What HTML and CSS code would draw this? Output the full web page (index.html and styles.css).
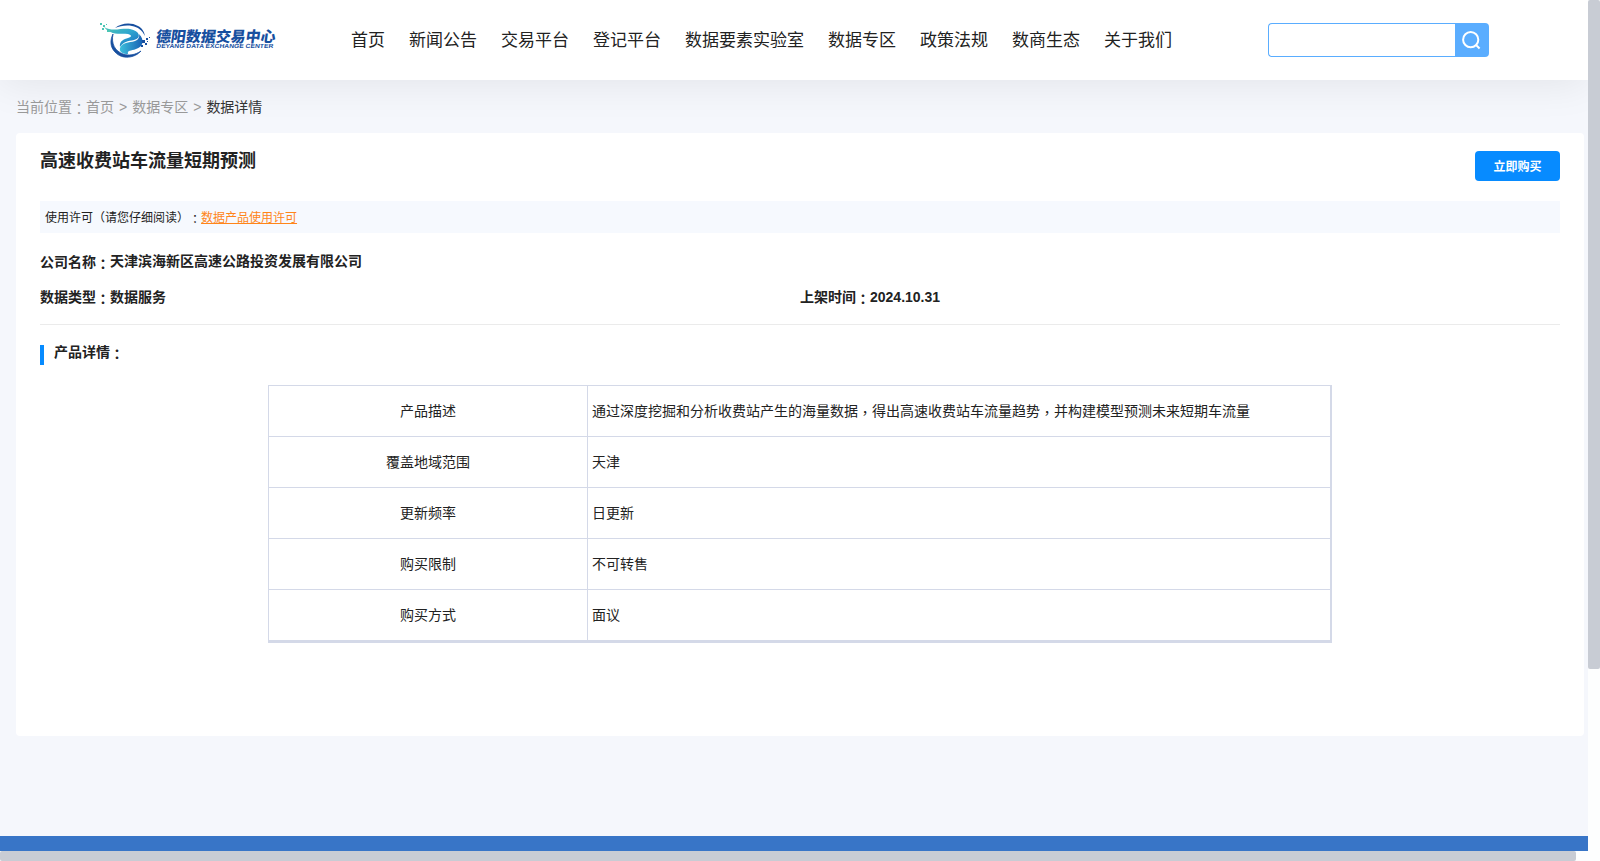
FILE: index.html
```
<!DOCTYPE html>
<html lang="zh-CN">
<head>
	<meta charset="UTF-8">
	<meta name="viewport" content="width=device-width, initial-scale=1.0">
	<title>数据详情</title>
	<link rel="stylesheet" href="styles.css">
</head>
<body>
	<div class="window">
		<div class="page">
			<header class="header">
				<a class="logo">
					<svg width="180" height="40" viewBox="0 0 180 40">
						<defs>
							<linearGradient id="wave" x1="0" y1="0" x2="1" y2="1">
								<stop offset="0" stop-color="#4cc5b4"/>
								<stop offset="0.5" stop-color="#2fa6cf"/>
								<stop offset="1" stop-color="#1668c0"/>
							</linearGradient>
							<linearGradient id="tail" x1="0" y1="0" x2="1" y2="0">
								<stop offset="0" stop-color="#3cc0dc"/>
								<stop offset="1" stop-color="#1760b4"/>
							</linearGradient>
						</defs>
						<path d="M15 8C21 3 31 2 38 6C42 8 44 11 45 16C42 10 38 7 32 6C26 5 20 6 15 8Z" fill="#174f9f"/>
						<path d="M13 14C11 24 15 31 23 34C29 36 35 35 41 31C35 38 22 40 15 32C10 27 10 20 13 14Z" fill="#174f9f" stroke="#174f9f" stroke-width="0.8"/>
						<path d="M4 7C12 12 21 8 30 9C40 11 42 18 34 20C28 21 23 22 20 27C19 21 24 19 28 18C32 17 32 15 28 14C21 13 11 16 4 7Z" fill="url(#wave)"/>
						<path d="M20 28C22 22 29 23 35 21C38 20 40 17 39 14C45 20 43 27 36 29C31 31 27 30 28 34C23 34 19 32 20 28Z" fill="url(#tail)"/>
						<path d="M0 3h2v2H0zM3 5h2v2H3zM2 8h2v2H2zM6 4h1v1H6zM7 10h3v2H7z" fill="#4cc5b4"/>
						<path d="M42 20h3v3h-3zM46 18h2v2h-2zM45 23h2v2h-2zM41 25h2v2h-2zM49 17h1v1h-1zM47 21h1v1h-1z" fill="#174f9f"/>
						<text class="logo-cn" x="54.5" y="22" textLength="119.5" lengthAdjust="spacingAndGlyphs" transform="translate(4 0) skewX(-8)">德阳数据交易中心</text>
						<text class="logo-en" x="56" y="28.2" textLength="117" lengthAdjust="spacingAndGlyphs" transform="translate(4 0) skewX(-8)">DEYANG DATA EXCHANGE CENTER</text>
					</svg>
				</a>
				<nav class="nav">
					<a>首页</a>
					<a>新闻公告</a>
					<a>交易平台</a>
					<a>登记平台</a>
					<a>数据要素实验室</a>
					<a>数据专区</a>
					<a>政策法规</a>
					<a>数商生态</a>
					<a>关于我们</a>
				</nav>
				<div class="search">
					<input type="text" class="search-input">
					<button class="search-btn">
						<svg width="20" height="20" viewBox="0 0 20 20" fill="none" stroke="#fff" stroke-width="2">
							<circle cx="9.7" cy="9.7" r="7.6"/>
							<path d="M15 15L18.6 18.4"/>
						</svg>
					</button>
				</div>
			</header>

			<div class="crumbs">
				<span>当前位置<i class="mid" lang="zh-TW">：</i>首页</span>
				<span>&gt;</span>
				<span>数据专区</span>
				<span>&gt;</span>
				<span class="current">数据详情</span>
			</div>

			<main class="card">
				<div class="card-head">
					<h1>高速收费站车流量短期预测</h1>
					<button class="btn-buy">立即购买</button>
				</div>
				<div class="license">使用许可（请您仔细阅读）<i class="mid" lang="zh-TW">：</i><a>数据产品使用许可</a></div>
				<div class="info">
					<div class="info-item wide"><span class="label">公司名称<i class="mid" lang="zh-TW">：</i></span><span>天津滨海新区高速公路投资发展有限公司</span></div>
					<div class="info-item"><span>数据类型<i class="mid" lang="zh-TW">：</i>数据服务</span></div>
					<div class="info-item"><span>上架时间<i class="mid" lang="zh-TW">：</i>2024.10.31</span></div>
				</div>
				<h2 class="section">产品详情<i class="mid" lang="zh-TW">：</i></h2>
				<div class="detail">
					<div class="name">产品描述</div>
					<div class="value">通过深度挖掘和分析收费站产生的海量数据<i class="mid" lang="zh-TW">，</i>得出高速收费站车流量趋势<i class="mid" lang="zh-TW">，</i>并构建模型预测未来短期车流量</div>
					<div class="name">覆盖地域范围</div>
					<div class="value">天津</div>
					<div class="name">更新频率</div>
					<div class="value">日更新</div>
					<div class="name">购买限制</div>
					<div class="value">不可转售</div>
					<div class="name">购买方式</div>
					<div class="value">面议</div>
				</div>
			</main>

			<footer class="footer"></footer>
		</div>
		<div class="scroll-y"><div class="thumb-y"></div></div>
		<div class="scroll-x"><div class="thumb-x"></div></div>
	</div>
</body>
</html>
```
FILE: styles.css
```
* {
	box-sizing: border-box;
}
body {
	margin: 0;
	font-family: "Liberation Sans", "Noto Sans CJK SC", sans-serif;
	font-size: 14px;
	color: #222;
	overflow: hidden;
	text-spacing-trim: space-all;
}
.window {
	display: grid;
	grid-template-columns: 1588px 12px;
	grid-template-rows: 851px 10px;
	background-color: #fdfefe;
}
.page {
	display: flex;
	flex-direction: column;
	background-color: #f5f7fc;
}
/* colons and commas sit in the middle of the square */
.mid {
	font-family: "Noto Sans CJK TC", sans-serif;
	font-style: normal;
	line-height: 0;
	vertical-align: -2px;
}

.header {
	display: flex;
	align-items: center;
	flex: none;
	height: 80px;
	padding-left: 100px;
	background-color: #fff;
	box-shadow: 0 4px 40px rgba(0, 0, 0, 0.08);
}
.logo {
	width: 251px;
	height: 40px;
}
.logo-cn {
	font: 900 15px "Noto Sans CJK SC", sans-serif;
	fill: #174f9f;
}
.logo-en {
	font: bold 6px "Liberation Sans", sans-serif;
	fill: #174f9f;
}
.nav {
	display: flex;
	gap: 24px;
	width: 917px;
	padding-top: 2px;
	font-size: 17px;
	line-height: 24px;
	white-space: nowrap;
}
.search {
	display: flex;
	width: 221px;
	height: 34px;
}
.search-input {
	width: 187px;
	padding: 0 10px;
	border: 1px solid #5aadff;
	border-right: none;
	border-radius: 4px 0 0 4px;
	outline: none;
}
.search-btn {
	display: flex;
	align-items: center;
	justify-content: center;
	width: 34px;
	padding: 0 2px 0 0;
	border: none;
	border-radius: 0 4px 4px 0;
	background-color: #5aadff;
}

.crumbs {
	display: flex;
	gap: 5px;
	height: 53px;
	padding-left: 16px;
	line-height: 54px;
	color: #999;
}
.crumbs .current {
	color: #333;
}

.card {
	height: 603px;
	margin: 0 4px 0 16px;
	padding: 18px 24px 0;
	border-radius: 4px;
	background-color: #fff;
}
.card-head {
	display: flex;
	justify-content: space-between;
	height: 50px;
}
.card-head h1 {
	margin: 0;
	font-size: 18px;
	line-height: 20px;
}
.btn-buy {
	width: 85px;
	height: 30px;
	padding: 0 0 2px;
	border: none;
	border-radius: 4px;
	background-color: #078bff;
	color: #fff;
	font: bold 12px "Liberation Sans", "Noto Sans CJK SC", sans-serif;
}
.license {
	height: 32px;
	padding-left: 5px;
	background-color: #f6f9fe;
	font-size: 12px;
	line-height: 34px;
}
.license a {
	color: #ff8519;
	text-decoration: underline;
}
.info {
	display: grid;
	grid-template-columns: 1fr 1fr;
	row-gap: 16px;
	height: 92px;
	padding-top: 18px;
	border-bottom: 1px solid #ebebeb;
	font-weight: bold;
	line-height: 20px;
	align-content: start;
}
.info-item {
	display: flex;
}
.info .wide {
	grid-column: 1 / 3;
}
.info .label {
	padding-top: 1px;
	margin-bottom: -1px;
}
.section {
	height: 20px;
	margin: 20px 0;
	padding-left: 10px;
	border-left: 4px solid #078bff;
	font-size: 14px;
	line-height: 14px;
}
.detail {
	display: grid;
	grid-template-columns: 319px 743px;
	grid-auto-rows: 51px;
	width: 1064px;
	height: 258px;
	margin: 0 auto;
	border-right: 2px solid #d4d9e8;
	border-bottom: 3px solid #d4d9e8;
	line-height: 51px;
}
.name,
.value {
	border-top: 1px solid #d4d9e8;
	border-left: 1px solid #d4d9e8;
}
.name {
	text-align: center;
}
.value {
	padding-left: 4px;
}

.footer {
	height: 15px;
	margin-top: auto;
	background-color: #3875c7;
}

.scroll-y {
	height: 851px;
}
.thumb-y {
	height: 669px;
	border-radius: 2px;
	background-color: #c8ccd4;
}
.thumb-x {
	width: 1576px;
	height: 10px;
	border-radius: 2px;
	background-color: #c8ccd4;
}
```
